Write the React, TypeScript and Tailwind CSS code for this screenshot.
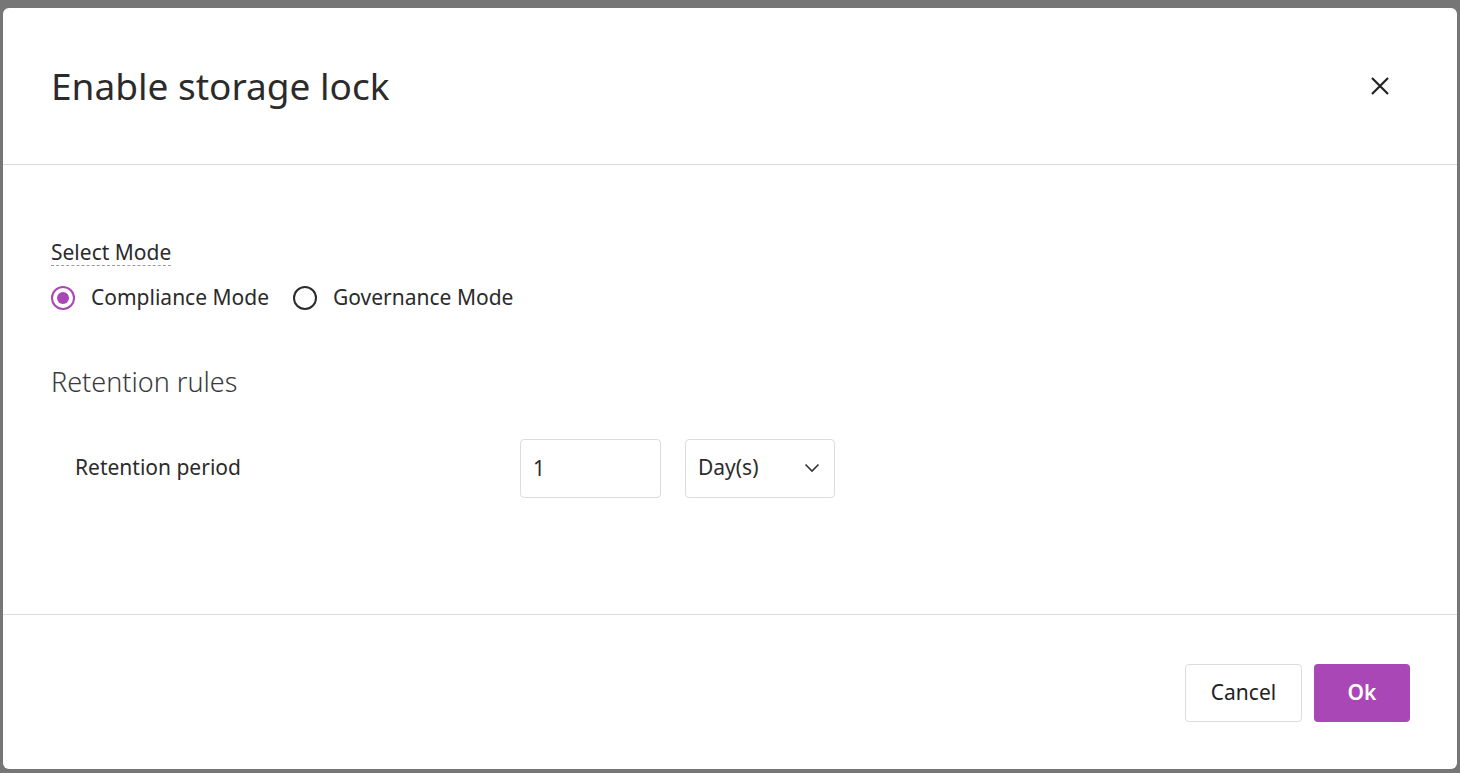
import React, { useState } from 'react';

// Storage lock dialog over a dimmed page
export default function App() {
    const [mode, setMode] = useState<'compliance' | 'governance'>('compliance');
    const [period, setPeriod] = useState('1');

    return (
        <div className="w-[1460px] h-[773px] bg-[#767676] pt-[8px] pl-[3px] overflow-hidden" style={{ fontFamily: '"Noto Sans", "Open Sans", sans-serif' }}>
            <div className="w-[1454px] h-[761px] bg-white rounded-[6px] flex flex-col text-[#2b2b2b]">
                <header className="h-[157px] flex items-center justify-between pl-[48px] pr-[62px] border-b border-[#dcdcdc]">
                    <h1 className="text-[37px] leading-none pb-[2px]">Enable storage lock</h1>
                    <button className="w-[30px] h-[30px] flex items-center justify-center text-[#222]">
                        <svg width="20" height="20" viewBox="0 0 20 20" fill="none" stroke="currentColor" strokeWidth="2.2">
                            <path d="M2 2 L18 18 M18 2 L2 18" />
                        </svg>
                    </button>
                </header>

                <main className="flex-1 pl-[48px] pt-[75px]">
                    <div className="inline-block text-[21px] leading-[24px] border-b border-dashed border-[#9a9a9a] pb-[1px]">Select Mode</div>
                    <div className="flex items-center mt-[16px] text-[21px] gap-[24px]">
                        <label className="flex items-center gap-[16px] cursor-pointer" onClick={() => setMode('compliance')}>
                            <Radio checked={mode === 'compliance'} />
                            <span>Compliance Mode</span>
                        </label>
                        <label className="flex items-center gap-[16px] cursor-pointer" onClick={() => setMode('governance')}>
                            <Radio checked={mode === 'governance'} />
                            <span>Governance Mode</span>
                        </label>
                    </div>

                    <h2 className="mt-[52px] text-[27px] font-light leading-[32px] text-[#3a3a3a]">Retention rules</h2>

                    <div className="flex items-center mt-[41px] pl-[24px]">
                        <span className="w-[445px] text-[21px]">Retention period</span>
                        <input
                            value={period}
                            onChange={(e) => setPeriod(e.target.value)}
                            className="w-[141px] h-[59px] border border-[#dcdcdc] rounded-[4px] px-[12px] text-[21px] outline-none"
                        />
                        <div className="ml-[24px] w-[150px] h-[59px] border border-[#dcdcdc] rounded-[4px] flex items-center justify-between pl-[12px] pr-[14px] text-[21px]">
                            <span>Day(s)</span>
                            <svg width="16" height="10" viewBox="0 0 16 10" fill="none" stroke="#333" strokeWidth="1.6">
                                <path d="M1.5 1.5 L8 8 L14.5 1.5" />
                            </svg>
                        </div>
                    </div>
                </main>

                <footer className="h-[155px] border-t border-[#dcdcdc] flex items-center justify-end gap-[12px] pr-[47px] pt-[1px]">
                    <button className="w-[117px] h-[58px] border border-[#dcdcdc] rounded-[4px] text-[21px] text-[#222] bg-white">Cancel</button>
                    <button className="w-[96px] h-[58px] rounded-[4px] text-[21px] font-semibold text-white bg-[#a947b6]">Ok</button>
                </footer>
            </div>
        </div>
    );
}

function Radio({ checked }: { checked: boolean }) {
    return (
        <span className={`w-[24px] h-[24px] rounded-full border-2 flex items-center justify-center ${checked ? 'border-[#a947b6]' : 'border-[#2b2b2b]'}`}>
            {checked && <span className="w-[12px] h-[12px] rounded-full bg-[#a947b6]" />}
        </span>
    );
}
